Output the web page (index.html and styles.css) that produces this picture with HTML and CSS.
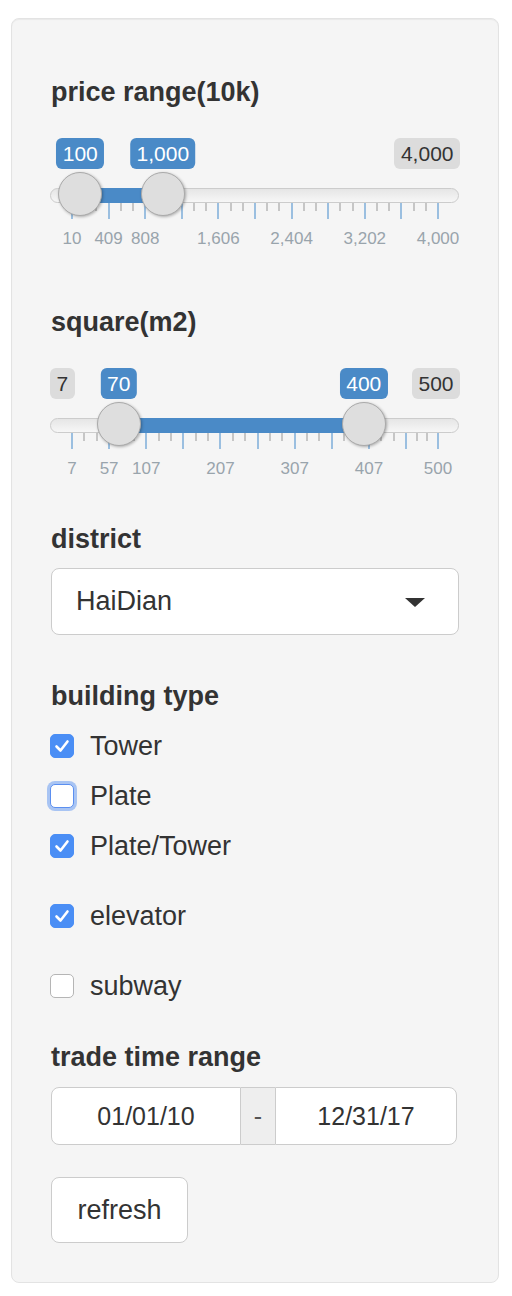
FILE: index.html
```html
<!DOCTYPE html>
<html>
<head>
<meta charset="utf-8">
<link rel="stylesheet" href="styles.css">
</head>
<body>
<div class="panel">
  <div class="label">price range(10k)</div>
  <div class="slider">
    <div class="track"></div>
    <div class="max-tag">4,000</div>
    <div class="grid">
      <span class="pol big" style="left:0%"></span>
      <span class="pol small" style="left:3.333%"></span><span class="pol small" style="left:6.667%"></span>
      <span class="pol big" style="left:10%"></span>
      <span class="pol small" style="left:13.333%"></span><span class="pol small" style="left:16.667%"></span>
      <span class="pol big" style="left:20%"></span>
      <span class="pol small" style="left:23.333%"></span><span class="pol small" style="left:26.667%"></span>
      <span class="pol big" style="left:30%"></span>
      <span class="pol small" style="left:33.333%"></span><span class="pol small" style="left:36.667%"></span>
      <span class="pol big" style="left:40%"></span>
      <span class="pol small" style="left:43.333%"></span><span class="pol small" style="left:46.667%"></span>
      <span class="pol big" style="left:50%"></span>
      <span class="pol small" style="left:53.333%"></span><span class="pol small" style="left:56.667%"></span>
      <span class="pol big" style="left:60%"></span>
      <span class="pol small" style="left:63.333%"></span><span class="pol small" style="left:66.667%"></span>
      <span class="pol big" style="left:70%"></span>
      <span class="pol small" style="left:73.333%"></span><span class="pol small" style="left:76.667%"></span>
      <span class="pol big" style="left:80%"></span>
      <span class="pol small" style="left:83.333%"></span><span class="pol small" style="left:86.667%"></span>
      <span class="pol big" style="left:90%"></span>
      <span class="pol small" style="left:93.333%"></span><span class="pol small" style="left:96.667%"></span>
      <span class="pol big" style="left:100%"></span>
      <span class="gtext" style="left:0%">10</span>
      <span class="gtext" style="left:10%">409</span>
      <span class="gtext" style="left:20%">808</span>
      <span class="gtext" style="left:40%">1,606</span>
      <span class="gtext" style="left:60%">2,404</span>
      <span class="gtext" style="left:80%">3,202</span>
      <span class="gtext" style="left:100%">4,000</span>
    </div>
    <div class="rail">
      <div class="bar" style="left:2.256%; width:22.556%"></div>
      <div class="tag" style="left:2.256%">100</div>
      <div class="tag" style="left:24.812%">1,000</div>
      <div class="handle" style="left:2.256%"></div>
      <div class="handle" style="left:24.812%"></div>
    </div>
  </div>

  <div class="label gap-slider">square(m2)</div>
  <div class="slider">
    <div class="track"></div>
    <div class="min-tag">7</div>
    <div class="max-tag">500</div>
    <div class="grid">
      <span class="pol big" style="left:0%"></span>
      <span class="pol small" style="left:3.381%"></span><span class="pol small" style="left:6.761%"></span>
      <span class="pol big" style="left:10.142%"></span>
      <span class="pol small" style="left:13.523%"></span><span class="pol small" style="left:16.903%"></span>
      <span class="pol big" style="left:20.284%"></span>
      <span class="pol small" style="left:23.665%"></span><span class="pol small" style="left:27.045%"></span>
      <span class="pol big" style="left:30.426%"></span>
      <span class="pol small" style="left:33.807%"></span><span class="pol small" style="left:37.187%"></span>
      <span class="pol big" style="left:40.568%"></span>
      <span class="pol small" style="left:43.949%"></span><span class="pol small" style="left:47.329%"></span>
      <span class="pol big" style="left:50.710%"></span>
      <span class="pol small" style="left:54.091%"></span><span class="pol small" style="left:57.471%"></span>
      <span class="pol big" style="left:60.852%"></span>
      <span class="pol small" style="left:64.233%"></span><span class="pol small" style="left:67.613%"></span>
      <span class="pol big" style="left:70.994%"></span>
      <span class="pol small" style="left:74.375%"></span><span class="pol small" style="left:77.755%"></span>
      <span class="pol big" style="left:81.136%"></span>
      <span class="pol small" style="left:84.517%"></span><span class="pol small" style="left:87.897%"></span>
      <span class="pol big" style="left:91.278%"></span>
      <span class="pol small" style="left:94.185%"></span><span class="pol small" style="left:97.093%"></span>
      <span class="pol big" style="left:100%"></span>
      <span class="gtext" style="left:0%">7</span>
      <span class="gtext" style="left:10.142%">57</span>
      <span class="gtext" style="left:20.284%">107</span>
      <span class="gtext" style="left:40.568%">207</span>
      <span class="gtext" style="left:60.852%">307</span>
      <span class="gtext" style="left:81.136%">407</span>
      <span class="gtext" style="left:100%">500</span>
    </div>
    <div class="rail">
      <div class="bar" style="left:12.779%; width:66.937%"></div>
      <div class="tag" style="left:12.779%">70</div>
      <div class="tag" style="left:79.716%">400</div>
      <div class="handle" style="left:12.779%"></div>
      <div class="handle" style="left:79.716%"></div>
    </div>
  </div>

  <div class="label gap-district">district</div>
  <div class="select">
    <span class="select-text">HaiDian</span>
    <span class="caret"></span>
  </div>

  <div class="label gap-building">building type</div>
  <div class="checks">
    <div class="check-row">
      <span class="box checked"><svg viewBox="0 0 24 24" width="24" height="24"><polyline points="6.5,12.5 10.5,16.5 17.5,7.5" fill="none" stroke="#fff" stroke-width="2.6" stroke-linecap="round" stroke-linejoin="round"/></svg></span>
      <span class="check-text">Tower</span>
    </div>
    <div class="check-row">
      <span class="box focused"></span>
      <span class="check-text">Plate</span>
    </div>
    <div class="check-row">
      <span class="box checked"><svg viewBox="0 0 24 24" width="24" height="24"><polyline points="6.5,12.5 10.5,16.5 17.5,7.5" fill="none" stroke="#fff" stroke-width="2.6" stroke-linecap="round" stroke-linejoin="round"/></svg></span>
      <span class="check-text">Plate/Tower</span>
    </div>
  </div>
  <div class="check-row single">
    <span class="box checked"><svg viewBox="0 0 24 24" width="24" height="24"><polyline points="6.5,12.5 10.5,16.5 17.5,7.5" fill="none" stroke="#fff" stroke-width="2.6" stroke-linecap="round" stroke-linejoin="round"/></svg></span>
    <span class="check-text">elevator</span>
  </div>
  <div class="check-row single">
    <span class="box"></span>
    <span class="check-text">subway</span>
  </div>

  <div class="label gap-trade">trade time range</div>
  <div class="daterange">
    <div class="date left">01/01/10</div>
    <div class="addon">-</div>
    <div class="date right">12/31/17</div>
  </div>

  <div class="btn">refresh</div>
</div>
</body>
</html>
```
FILE: styles.css
```css
* { box-sizing: border-box; }
html, body { margin: 0; padding: 0; background: #fff; }
body {
  font-family: "Liberation Sans", Arial, Helvetica, sans-serif;
  color: #333;
  padding-top: 18px;
}
.panel {
  margin-left: 11px;
  width: 488px;
  background: #f5f5f5;
  border: 1px solid #e3e3e3;
  border-radius: 8px;
  box-shadow: inset 0 1px 1px rgba(0,0,0,0.05);
  padding: 54px 39px 39px 39px;
}
.label {
  font-size: 27px;
  font-weight: bold;
  line-height: 38px;
  height: 38px;
  white-space: nowrap;
}
.gap-slider { margin-top: 54px; }
.gap-district { margin-top: 41px; }
.gap-building { margin-top: 42px; }
.gap-trade { margin-top: 27px; }

/* slider */
.slider {
  position: relative;
  margin-top: 27px;
  margin-left: -1px;
  width: 410px;
  height: 111px;
}
.track {
  position: absolute;
  left: 0; right: 1px;
  top: 50px;
  height: 15px;
  border: 1px solid #ccc;
  border-radius: 8px;
  background: linear-gradient(to bottom, #ddd -50%, #fff 150%);
}
.rail {
  position: absolute;
  left: 22px; right: 22px;
  top: 0; bottom: 0;
}
.bar {
  position: absolute;
  top: 50px;
  height: 15px;
  background: #4a8ac7;
}
.tag, .min-tag, .max-tag {
  position: absolute;
  top: 0;
  height: 31px;
  font-size: 21px;
  line-height: 28px;
  padding: 1.5px 6.5px;
  border-radius: 6px;
  white-space: nowrap;
}
.tag {
  background: #4a8ac7;
  color: #fff;
  transform: translateX(-50%);
}
.min-tag, .max-tag {
  background: rgba(0,0,0,0.1);
  color: #333;
}
.min-tag { left: 0; }
.max-tag { right: 0; }
.handle {
  position: absolute;
  top: 34px;
  width: 44px;
  height: 44px;
  margin-left: -22px;
  border-radius: 50%;
  background: #dedede;
  border: 1px solid #aaa;
  box-shadow: 1px 1px 3px rgba(0,0,0,0.3);
}
.grid {
  position: absolute;
  left: 22px; right: 22px;
  top: 65px;
  height: 46px;
}
.pol {
  position: absolute;
  top: 0;
  width: 2px;
  margin-left: -1px;
}
.pol.big { height: 16px; background: #9bbfe0; }
.pol.small { height: 8px; background: #c6c6c6; }
.gtext {
  position: absolute;
  top: 26px;
  font-size: 17px;
  line-height: 20px;
  color: #99a4ac;
  transform: translateX(-50%);
  white-space: nowrap;
}

/* select */
.select {
  margin-top: 10px;
  height: 67px;
  width: 408px;
  background: #fff;
  border: 1px solid #ccc;
  border-radius: 8px;
  display: flex;
  align-items: center;
  justify-content: space-between;
  padding: 0 33px 0 24px;
}
.select-text { font-size: 27px; }
.caret {
  width: 0; height: 0;
  border-left: 10px solid transparent;
  border-right: 10px solid transparent;
  border-top: 9px solid #333;
  margin-top: 1px;
}

/* checkboxes */
.checks { margin-top: 6px; }
.check-row {
  height: 50px;
  display: flex;
  align-items: center;
}
.check-row.single { margin-top: 20px; }
.box {
  width: 24px;
  height: 24px;
  margin-left: -1px;
  border-radius: 5px;
  background: #fff;
  border: 1px solid #b5b5b5;
  display: flex;
  flex-shrink: 0;
}
.box.checked {
  background: #4a8ef5;
  border-color: #4a8ef5;
}
.box.checked svg { margin: -1px; }
.box.focused {
  border: 1px solid #5b8ff0;
  box-shadow: 0 0 0 3px rgba(104,154,240,0.55);
}
.check-text {
  font-size: 27px;
  line-height: 50px;
  margin-left: 16px;
}

/* date range */
.daterange {
  margin-top: 11px;
  height: 58px;
  width: 406px;
  display: flex;
}
.date {
  background: #fff;
  border: 1px solid #ccc;
  font-size: 25px;
  color: #333;
  display: flex;
  align-items: center;
  justify-content: center;
}
.date.left { width: 190px; border-radius: 8px 0 0 8px; }
.date.right { flex: 1; border-radius: 0 8px 8px 0; }
.addon {
  width: 34px;
  background: #eee;
  border-top: 1px solid #ccc;
  border-bottom: 1px solid #ccc;
  font-size: 25px;
  color: #555;
  display: flex;
  align-items: center;
  justify-content: center;
}

/* button */
.btn {
  margin-top: 32px;
  width: 137px;
  height: 66px;
  background: #fff;
  border: 1px solid #ccc;
  border-radius: 8px;
  font-size: 27px;
  display: flex;
  align-items: center;
  justify-content: center;
}
```
